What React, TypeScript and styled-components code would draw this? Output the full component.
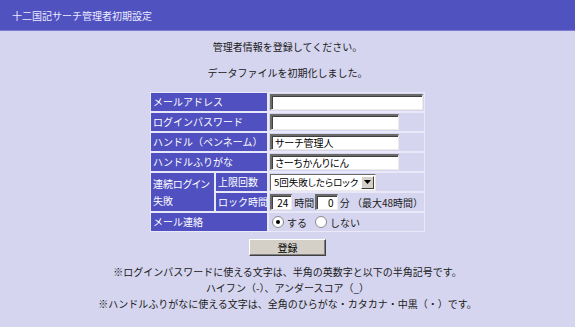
import React from 'react'
import styled, { createGlobalStyle } from 'styled-components'

const GlobalStyle = createGlobalStyle`
  body {
    margin: 0;
    background: #d5d5ef;
    font-family: "Noto Sans CJK JP", "Noto Sans", sans-serif;
    font-size: 10px;
    color: #202020;
  }
`

const Header = styled.div`
  height: 30px;
  background: #5052c0;
  border-bottom: 1px solid #7c7cd6;
  color: #ececff;
  display: flex;
  align-items: center;
  padding-left: 12px;
`

const Main = styled.div`
  display: flex;
  flex-direction: column;
  align-items: center;
  padding-top: 8px;
`

const Message = styled.div<{ gap?: number }>`
  line-height: 16px;
  margin-top: ${p => p.gap ?? 0}px;
`

const Table = styled.div`
  margin-top: 11px;
  display: grid;
  grid-template-columns: 63px 51px 155px;
  grid-auto-rows: 18px;
  gap: 2px;
  padding: 1px;
  background: #e8e8f8;
  width: 273px;
`

const Label = styled.div<{ span?: number; rows?: number }>`
  grid-column: span ${p => p.span ?? 1};
  grid-row: span ${p => p.rows ?? 1};
  background: #5050c0;
  color: #ffffff;
  padding: 2px 0 0 2px;
  line-height: ${p => (p.rows ? 17 : 14)}px;
  white-space: nowrap;
  overflow: hidden;
  font-feature-settings: ${p => (p.rows ? '"palt"' : 'normal')};
`

const Value = styled.div`
  background: #d5d5ef;
  display: flex;
  align-items: center;
  padding-left: 1px;
  white-space: nowrap;
`

const Input = styled.div<{ w: number; right?: boolean }>`
  box-sizing: border-box;
  width: ${p => p.w}px;
  height: 16px;
  background: #fff;
  border-style: solid;
  border-width: 2px 1px 1px 2px;
  border-color: #6a6a6a #ecebe6 #ecebe6 #6a6a6a;
  box-shadow: inset 1px 1px 0 #404040;
  padding: 0 3px;
  line-height: 13px;
  text-align: ${p => (p.right ? 'right' : 'left')};
  color: #000;
  overflow: hidden;
  font-feature-settings: "palt";
`

const Select = styled.div`
  box-sizing: border-box;
  height: 17px;
  display: flex;
  align-items: center;
  background: #fff;
  border: 1px solid;
  border-color: #6a6a6a #ecebe6 #ecebe6 #6a6a6a;
  padding-left: 3px;
  color: #000;
  font-size: 9.5px;
  font-feature-settings: "palt";
`

const SelectText = styled.span`
  margin-right: 3px;
`

const SelectArrow = styled.span`
  width: 13px;
  height: 13px;
  margin-right: 1px;
  background: #d4d0c8;
  border: 1px solid;
  border-color: #fff #404040 #404040 #fff;
  box-sizing: border-box;
  display: flex;
  align-items: center;
  justify-content: center;
`

const Unit = styled.span`
  margin: 0 1px 0 2px;
`

const Radio = styled.span<{ checked?: boolean }>`
  width: 12px;
  height: 12px;
  border-radius: 50%;
  background: #fff;
  border: 1px solid #8a8a8a;
  box-sizing: border-box;
  display: inline-flex;
  align-items: center;
  justify-content: center;
  margin: 0 3px 0 2px;
  &::after {
    content: '';
    width: 4px;
    height: 4px;
    border-radius: 50%;
    background: ${p => (p.checked ? '#000' : 'transparent')};
  }
`

const RadioLabel = styled.span`
  margin-right: 6px;
`

const Button = styled.div`
  margin-top: 7px;
  box-sizing: border-box;
  width: 77px;
  height: 17px;
  background: #d4d0c8;
  border: 1px solid;
  border-color: #ffffff #404040 #404040 #ffffff;
  box-shadow: inset -1px -1px 0 #808080;
  display: flex;
  align-items: center;
  justify-content: center;
  color: #000;
`

const Notes = styled.div`
  margin-top: 8px;
  text-align: center;
  line-height: 16px;
`

export default function App() {
  return (
    <>
      <GlobalStyle />
      <Header>十二国記サーチ管理者初期設定</Header>
      <Main>
        <Message>管理者情報を登録してください。</Message>
        <Message gap={10}>データファイルを初期化しました。</Message>
        <Table>
          <Label span={2}>メールアドレス</Label>
          <Value><Input w={153} /></Value>
          <Label span={2}>ログインパスワード</Label>
          <Value><Input w={129} /></Value>
          <Label span={2}>ハンドル（ペンネーム）</Label>
          <Value><Input w={129}>サーチ管理人</Input></Value>
          <Label span={2}>ハンドルふりがな</Label>
          <Value><Input w={129}>さーちかんりにん</Input></Value>
          <Label rows={2}>連続ログイン<br />失敗</Label>
          <Label>上限回数</Label>
          <Value>
            <Select>
              <SelectText>5回失敗したらロック</SelectText>
              <SelectArrow>
                <svg width="7" height="4" viewBox="0 0 7 4">
                  <path d="M0 0h7L3.5 4z" fill="#000" />
                </svg>
              </SelectArrow>
            </Select>
          </Value>
          <Label>ロック時間</Label>
          <Value>
            <Input w={23} right>24</Input>
            <Unit>時間</Unit>
            <Input w={23} right>0</Input>
            <Unit>分 （最大48時間）</Unit>
          </Value>
          <Label span={2}>メール連絡</Label>
          <Value>
            <Radio checked />
            <RadioLabel>する</RadioLabel>
            <Radio />
            <RadioLabel>しない</RadioLabel>
          </Value>
        </Table>
        <Button>登録</Button>
        <Notes>
          ※ログインパスワードに使える文字は、半角の英数字と以下の半角記号です。<br />
          ハイフン（-）、アンダースコア（_）<br />
          ※ハンドルふりがなに使える文字は、全角のひらがな・カタカナ・中黒（・）です。
        </Notes>
      </Main>
    </>
  )
}
